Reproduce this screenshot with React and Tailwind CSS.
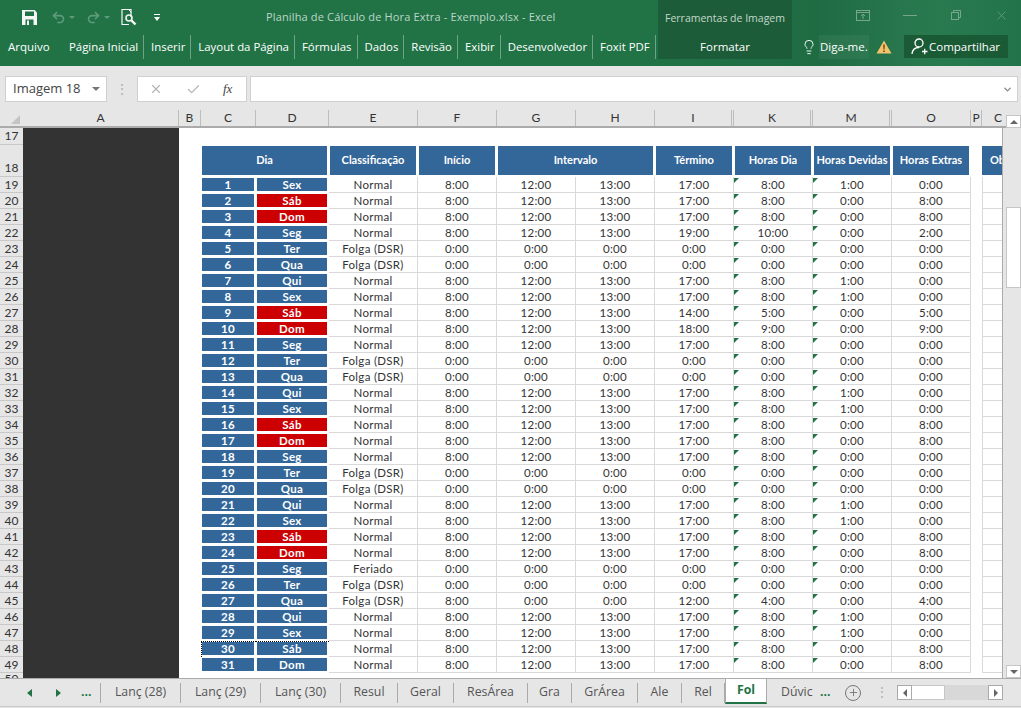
import { X, Check, ChevronDown, Lightbulb, Plus, Undo2, Redo2 } from "lucide-react";

const cols = "grid-cols-[22px_55px_73px_89px_79px_79px_79px_79px_79px_79px_79px_11px_21px]";
const colHeads = [
  ["A", "w-[156px] border-r"], ["B", "w-[22px] border-r"], ["C", "w-[55px] border-r"], ["D", "w-[73px] border-r"], ["E", "w-[89px] border-r"], ["F", "w-[79px] border-r"],
  ["G", "w-[79px] border-r"], ["H", "w-[79px] border-r"], ["I", "w-[79px] border-r-[3px] border-double"], ["K", "w-[79px] border-r-[3px] border-double"], ["M", "w-[79px] border-r-[3px] border-double"], ["O", "w-[79px] border-r"],
  ["P", "w-[11px] border-r"], ["C", "w-[21px] !justify-end pr-px"],
];
const tabsMenu = ["Página Inicial", "Inserir", "Layout da Página", "Fórmulas", "Dados", "Revisão", "Exibir", "Desenvolvedor", "Foxit PDF"];
const sheets = [
  ["Lanç (28)", "w-[80px]"], ["Lanç (29)", "w-[80px]"], ["Lanç (30)", "w-[80px]"], ["Resul", "w-[57px]"], ["Geral", "w-[56px]"],
  ["ResÁrea", "w-[74px]"], ["Gra", "w-[44px]"], ["GrÁrea", "w-[66px]"], ["Ale", "w-[44px]"], ["Rel", "w-[43px]"],
];
const weekdays = ["Sex", "Sáb", "Dom", "Seg", "Ter", "Qua", "Qui"];

const rows = Array.from({ length: 31 }, (_, i) => {
  const day = i + 1;
  const wd = weekdays[i % 7];
  const off = wd === "Ter" || wd === "Qua";
  let c = off ? "Folga (DSR)" : "Normal";
  let v = off ? ["0:00", "0:00", "0:00", "0:00"] : ["8:00", "12:00", "13:00", "17:00"];
  let hd = off ? "0:00" : "8:00";
  let dev = wd === "Sex" || wd === "Qui" ? "1:00" : "0:00";
  let ex = wd === "Sáb" || wd === "Dom" ? "8:00" : "0:00";
  if (day === 4) { v = ["8:00", "12:00", "13:00", "19:00"]; hd = "10:00"; ex = "2:00"; }
  if (day === 9) { v = ["8:00", "12:00", "13:00", "14:00"]; hd = "5:00"; ex = "5:00"; }
  if (day === 10) { v = ["8:00", "12:00", "13:00", "18:00"]; hd = "9:00"; ex = "9:00"; }
  if (day === 25) { c = "Feriado"; v = ["0:00", "0:00", "0:00", "0:00"]; hd = "0:00"; }
  if (day === 27) { v = ["8:00", "0:00", "0:00", "12:00"]; hd = "4:00"; ex = "4:00"; }
  const red = (wd === "Sáb" || wd === "Dom") && day < 30;
  return { day, wd, c, v, hd, dev, ex, red };
});

const Cell = ({ children, flag }) => (
  <div className="relative flex items-center justify-center border-r border-b border-[#d9d9d9]">
    {flag && <span className="absolute left-0 top-px w-0 h-0 border-t-[5px] border-r-[5px] border-t-[#217346] border-r-transparent" />}
    {children}
  </div>
);

const HeadCell = ({ children, className = "" }) => (
  <div className={`bg-[#336699] text-white font-bold text-[11px] flex items-center justify-center mb-[2px] mt-[1px] ml-[1px] mr-[2px] ${className}`}>
    {children}
  </div>
);

const DataRow = ({ r }) => {
  const marked = r.day === 30;
  return (
    <div className={`grid ${cols} h-[16px] grid-rows-[16px] text-[11.5px] leading-none text-[#333] tracking-[0.3px]`}>
      <div />
      <div className={`pb-[2px] pr-[2px] ${marked ? "border-t border-l border-dotted border-black" : "pt-px pl-px"}`}>
        <div className="h-full bg-[#336699] text-white font-bold flex items-center justify-center">{r.day}</div>
      </div>
      <div className={`pl-px pb-[2px] pr-[2px] ${marked ? "border-t border-dotted border-black" : "pt-px"}`}>
        <div className={`h-full text-white font-bold flex items-center justify-center ${r.red ? "bg-[#cc0000]" : "bg-[#336699]"}`}>{r.wd}</div>
      </div>
      <Cell>{r.c}</Cell>
      {r.v.map((t, i) => <Cell key={i}>{t}</Cell>)}
      <Cell flag>{r.hd}</Cell>
      <Cell flag>{r.dev}</Cell>
      <Cell>{r.ex}</Cell>
      <div />
      <div className="border-l border-b border-[#d9d9d9]" />
    </div>
  );
};

const SaveIcon = () => (
  <svg width="15" height="15" viewBox="0 0 15 15" className="ml-[22px]">
    <path d="M0 0H12.5L15 2.5V15H0Z" fill="#f4f7f5" />
    <rect x="3" y="1.5" width="9" height="4.5" fill="#217346" />
    <rect x="3.5" y="9.5" width="8" height="5.5" fill="#217346" />
    <rect x="5" y="10.5" width="2" height="4.5" fill="#f4f7f5" />
  </svg>
);

const PreviewIcon = () => (
  <svg width="16" height="17" viewBox="0 0 16 17" className="ml-[11px]" fill="none" stroke="#f4f7f5">
    <path d="M10 8V.5H1V15.5H8" strokeWidth="1.2" />
    <path d="M7.5 .5 10.5 3.5" strokeWidth="1" />
    <circle cx="8" cy="9" r="3" strokeWidth="1.6" />
    <path d="M10.5 11.5 14.5 15.5" strokeWidth="2.4" />
  </svg>
);

const ShareIcon = () => (
  <svg width="17" height="17" viewBox="0 0 17 17" className="ml-[7px]" fill="none" stroke="white" strokeWidth="1.3">
    <circle cx="8" cy="5" r="4" />
    <path d="M1 16C1.5 11.5 4 9.5 8 9.5" />
    <path d="M11 13.5H16.5M13.7 10.7V16.3" />
  </svg>
);

export default function App() {
  return (
    <div className="w-[1021px] h-[708px] overflow-hidden flex flex-col bg-[#e6e6e6] font-['Open_Sans',sans-serif] text-[#444]">
      {/* title bar + ribbon tabs */}
      <header className="relative h-[66px] shrink-0 bg-[linear-gradient(90deg,#217346_0%,#217346_62%,#1f6c43_80%,#2a7a50_92%,#23734a_100%)] text-white flex flex-col">
        <div className="h-[35px] flex items-center relative">
          <SaveIcon />
          <Undo2 size={15} strokeWidth={2.5} className="ml-[14px] text-[#5f9a7c]" />
          <span className="ml-[3px] w-0 h-0 border-x-[3px] border-x-transparent border-t-[3px] border-t-[#5f9a7c]" />
          <Redo2 size={15} strokeWidth={2.5} className="ml-[11px] text-[#5f9a7c]" />
          <span className="ml-[3px] w-0 h-0 border-x-[3px] border-x-transparent border-t-[3px] border-t-[#5f9a7c]" />
          <PreviewIcon />
          <div className="ml-[17px] flex flex-col items-center gap-[2px]">
            <span className="w-[6px] h-px bg-white" />
            <span className="w-0 h-0 border-x-[3px] border-x-transparent border-t-[4px] border-t-white" />
          </div>
          <span className="absolute left-[266px] top-[9px] text-[11px] leading-4 text-[#bcd6c7] tracking-[0.15px] whitespace-nowrap">Planilha de Cálculo de Hora Extra - Exemplo.xlsx - Excel</span>
        </div>
        <nav className="h-[31px] flex items-start text-[11.4px] leading-[24px] whitespace-nowrap">
          <span className="ml-[8px] w-[54px] text-[11.5px]">Arquivo</span>
          {tabsMenu.map((t) => (
            <span key={t} className="border-r border-[#6fa287] h-[24px] pl-[7px] pr-[5px]">{t}</span>
          ))}
        </nav>
        {/* picture tools block */}
        <div className="absolute left-[658px] top-0 w-[134px] h-[59px] bg-[#1d5c38] flex flex-col items-center">
          <span className="mt-[10px] leading-4 text-[10.5px] text-[#c3d8cb] whitespace-nowrap">Ferramentas de Imagem</span>
          <span className="mt-[13px] leading-4 text-[11.5px]">Formatar</span>
        </div>
        <div className="absolute left-[801px] top-[35px] h-[24px] flex items-center text-[11.5px] whitespace-nowrap">
          <Lightbulb size={16} strokeWidth={1.4} />
          <span className="ml-[2px] h-full px-px flex items-center bg-white/5">Diga-me.</span>
          <svg width="16" height="14" viewBox="0 0 16 14" className="ml-[7px]">
            <path d="M8 0.5 15.5 13.5H.5Z" fill="#f0c36d" />
            <path d="M7.2 4.5h1.6l-.2 5H7.4zM7.2 10.5h1.6v1.6H7.2z" fill="#8a3a10" />
          </svg>
        </div>
        <div className="absolute left-[904px] top-[35px] w-[104px] h-[23px] bg-[#1a5a35] flex items-center text-[11.5px] whitespace-nowrap">
          <ShareIcon />
          <span className="ml-px">Compartilhar</span>
        </div>
        {/* window buttons */}
        <svg width="14" height="11" viewBox="0 0 14 11" fill="none" stroke="#78a68d" className="absolute left-[856px] top-[10px]">
          <rect x=".5" y=".5" width="13" height="10" />
          <path d="M.5 2.5H13.5M7 9V4.5M5 6 7 4.2 9 6" />
        </svg>
        <span className="absolute left-[903px] top-[15px] w-[14px] h-px bg-[#78a68d]" />
        <svg width="10" height="10" viewBox="0 0 10 10" fill="none" stroke="#78a68d" className="absolute left-[951px] top-[10px]">
          <rect x=".5" y="2.5" width="7" height="7" />
          <path d="M2.5 2.5V.5H9.5V7.5H7.5" />
        </svg>
        <X size={15} strokeWidth={1} className="absolute left-[994px] top-[8px] text-[#78a68d]" />
      </header>

      {/* formula bar */}
      <div className="h-[44px] shrink-0 flex items-start pt-[10px]">
        <div className="ml-[5px] w-[102px] h-[26px] bg-white border border-[#d0d0d0] flex items-center justify-between pl-[7px] pr-[6px] text-[13px]">
          <span>Imagem 18</span>
          <span className="w-0 h-0 border-x-[4px] border-x-transparent border-t-[4px] border-t-[#777]" />
        </div>
        <div className="w-[30px] h-[26px] flex items-center justify-center text-[#aaa] text-[12px] leading-none">⋮</div>
        <div className="w-[110px] h-[26px] bg-white border border-[#d0d0d0] flex items-center">
          <X size={14} className="ml-[11px] text-[#b5b5b5]" />
          <Check size={15} className="ml-[23px] text-[#b5b5b5]" />
          <span className="ml-[22px] font-['Liberation_Serif',serif] italic text-[13px] text-[#444]">fx</span>
        </div>
        <div className="ml-[3px] w-[768px] h-[26px] bg-white border border-[#d0d0d0] flex items-center justify-end pr-[4px]">
          <ChevronDown size={11} strokeWidth={3} className="text-[#888]" />
        </div>
      </div>

      {/* column headers */}
      <div className="h-[18px] shrink-0 flex font-['Lato',sans-serif] text-[12px] leading-none text-[#333] border-b-2 border-[#ababab]">
        <div className="w-[23px] relative">
          <span className="absolute right-[3px] bottom-[2px] w-[9px] h-[9px] bg-[#c4c4c4] [clip-path:polygon(100%_0,100%_100%,0_100%)]" />
        </div>
        {colHeads.map(([l, w], i) => (
          <div key={i} className={`${w} flex items-center justify-center border-[#bdbdbd]`}>{l}</div>
        ))}
      </div>

      {/* sheet area */}
      <div className="h-[550px] shrink-0 flex">
        <div className="w-[23px] h-[550px] shrink-0 overflow-hidden font-['Lato',sans-serif] text-[12px] leading-none text-[#333] flex flex-col">
          <div className="h-[17px] shrink-0 flex items-center justify-center border-b border-[#c8c8c8]">17</div>
          <div className="h-[32px] shrink-0 flex items-end justify-center pb-[2px] border-b border-[#c8c8c8]">18</div>
          {rows.map((r) => (
            <div key={r.day} className="h-[16px] shrink-0 flex items-center justify-center border-b border-[#c8c8c8]">{r.day + 18}</div>
          ))}
          <div className="h-[5px] shrink-0 overflow-hidden text-center">50</div>
        </div>
        <div className="w-[156px] shrink-0 bg-[#333333]" />
        <div className="w-[824px] h-[550px] shrink-0 bg-white border-r border-[#ababab] font-['Lato',sans-serif] overflow-hidden">
          <div className="h-[17px]" />
          <div className={`grid ${cols} h-[32px]`}>
            <div />
            <HeadCell className="col-span-2">Dia</HeadCell>
            <HeadCell>Classificação</HeadCell>
            <HeadCell>Início</HeadCell>
            <HeadCell className="col-span-2">Intervalo</HeadCell>
            <HeadCell>Término</HeadCell>
            <HeadCell>Horas Dia</HeadCell>
            <HeadCell>Horas Devidas</HeadCell>
            <HeadCell>Horas Extras</HeadCell>
            <div />
            <div className="bg-[#336699] text-white font-bold text-[11px] flex items-center pl-[8px] mt-px mb-[2px] overflow-hidden">Ob</div>
          </div>
          {rows.map((r) => <DataRow key={r.day} r={r} />)}
        </div>
        {/* vertical scrollbar */}
        <div className="w-[18px] shrink-0 relative z-10 flex flex-col items-end -mt-[13px] h-[563px]">
          <div className="w-[15px] h-[13px] bg-white border border-[#c6c6c6] flex items-center justify-center">
            <span className="w-0 h-0 border-x-[4px] border-x-transparent border-b-[4px] border-b-[#666]" />
          </div>
          <div className="w-[15px] h-[81px] bg-white border border-[#c6c6c6] mt-[79px]" />
          <div className="w-[15px] h-[13px] bg-white border border-[#c6c6c6] flex items-center justify-center mt-auto">
            <span className="w-0 h-0 border-x-[4px] border-x-transparent border-t-[4px] border-t-[#666]" />
          </div>
        </div>
      </div>

      {/* sheet tabs */}
      <div className="h-[28px] shrink-0 flex items-center border-t border-[#ababab] text-[12.3px] text-[#555] whitespace-nowrap">
        <span className="ml-[27px] w-0 h-0 border-y-[4px] border-y-transparent border-r-[5px] border-r-[#217346]" />
        <span className="ml-[24px] w-0 h-0 border-y-[4px] border-y-transparent border-l-[5px] border-l-[#217346]" />
        <span className="ml-[20px] w-[19px] text-[#217346] font-bold">...</span>
        <div className="h-[20px] border-l border-[#aaa]" />
        {sheets.map(([t, w]) => (
          <div key={t} className={`${w} h-[20px] shrink-0 flex items-center justify-center border-r border-[#aaa]`}>{t}</div>
        ))}
        <div className="w-[42px] h-[25px] self-start shrink-0 bg-white border-x border-[#ababab] border-b-2 border-b-[#217346] text-[#217346] font-bold flex items-center justify-center">Fol</div>
        <span className="ml-[14px] w-[36px] overflow-hidden">Dúvic</span>
        <span className="ml-[3px] w-[25px] text-[#217346] font-bold">...</span>
        <div className="w-[16px] h-[16px] rounded-full border border-[#777] flex items-center justify-center">
          <Plus size={11} className="text-[#777]" />
        </div>
        <span className="ml-[15px] w-[21px] text-[#aaa] leading-none">⋮</span>
        <div className="w-[106px] h-[15px] flex bg-[#d8d8d8]">
          <div className="w-[15px] bg-white border border-[#aaa] flex items-center justify-center">
            <span className="w-0 h-0 border-y-[4px] border-y-transparent border-r-[4px] border-r-[#666]" />
          </div>
          <div className="w-[33px] bg-white border-y border-r border-[#c6c6c6]" />
          <div className="ml-auto w-[15px] bg-white border border-[#aaa] flex items-center justify-center">
            <span className="w-0 h-0 border-y-[4px] border-y-transparent border-l-[4px] border-l-[#666]" />
          </div>
        </div>
      </div>
      <div className="flex-1 border-t border-[#c8c8c8]" />
    </div>
  );
}
